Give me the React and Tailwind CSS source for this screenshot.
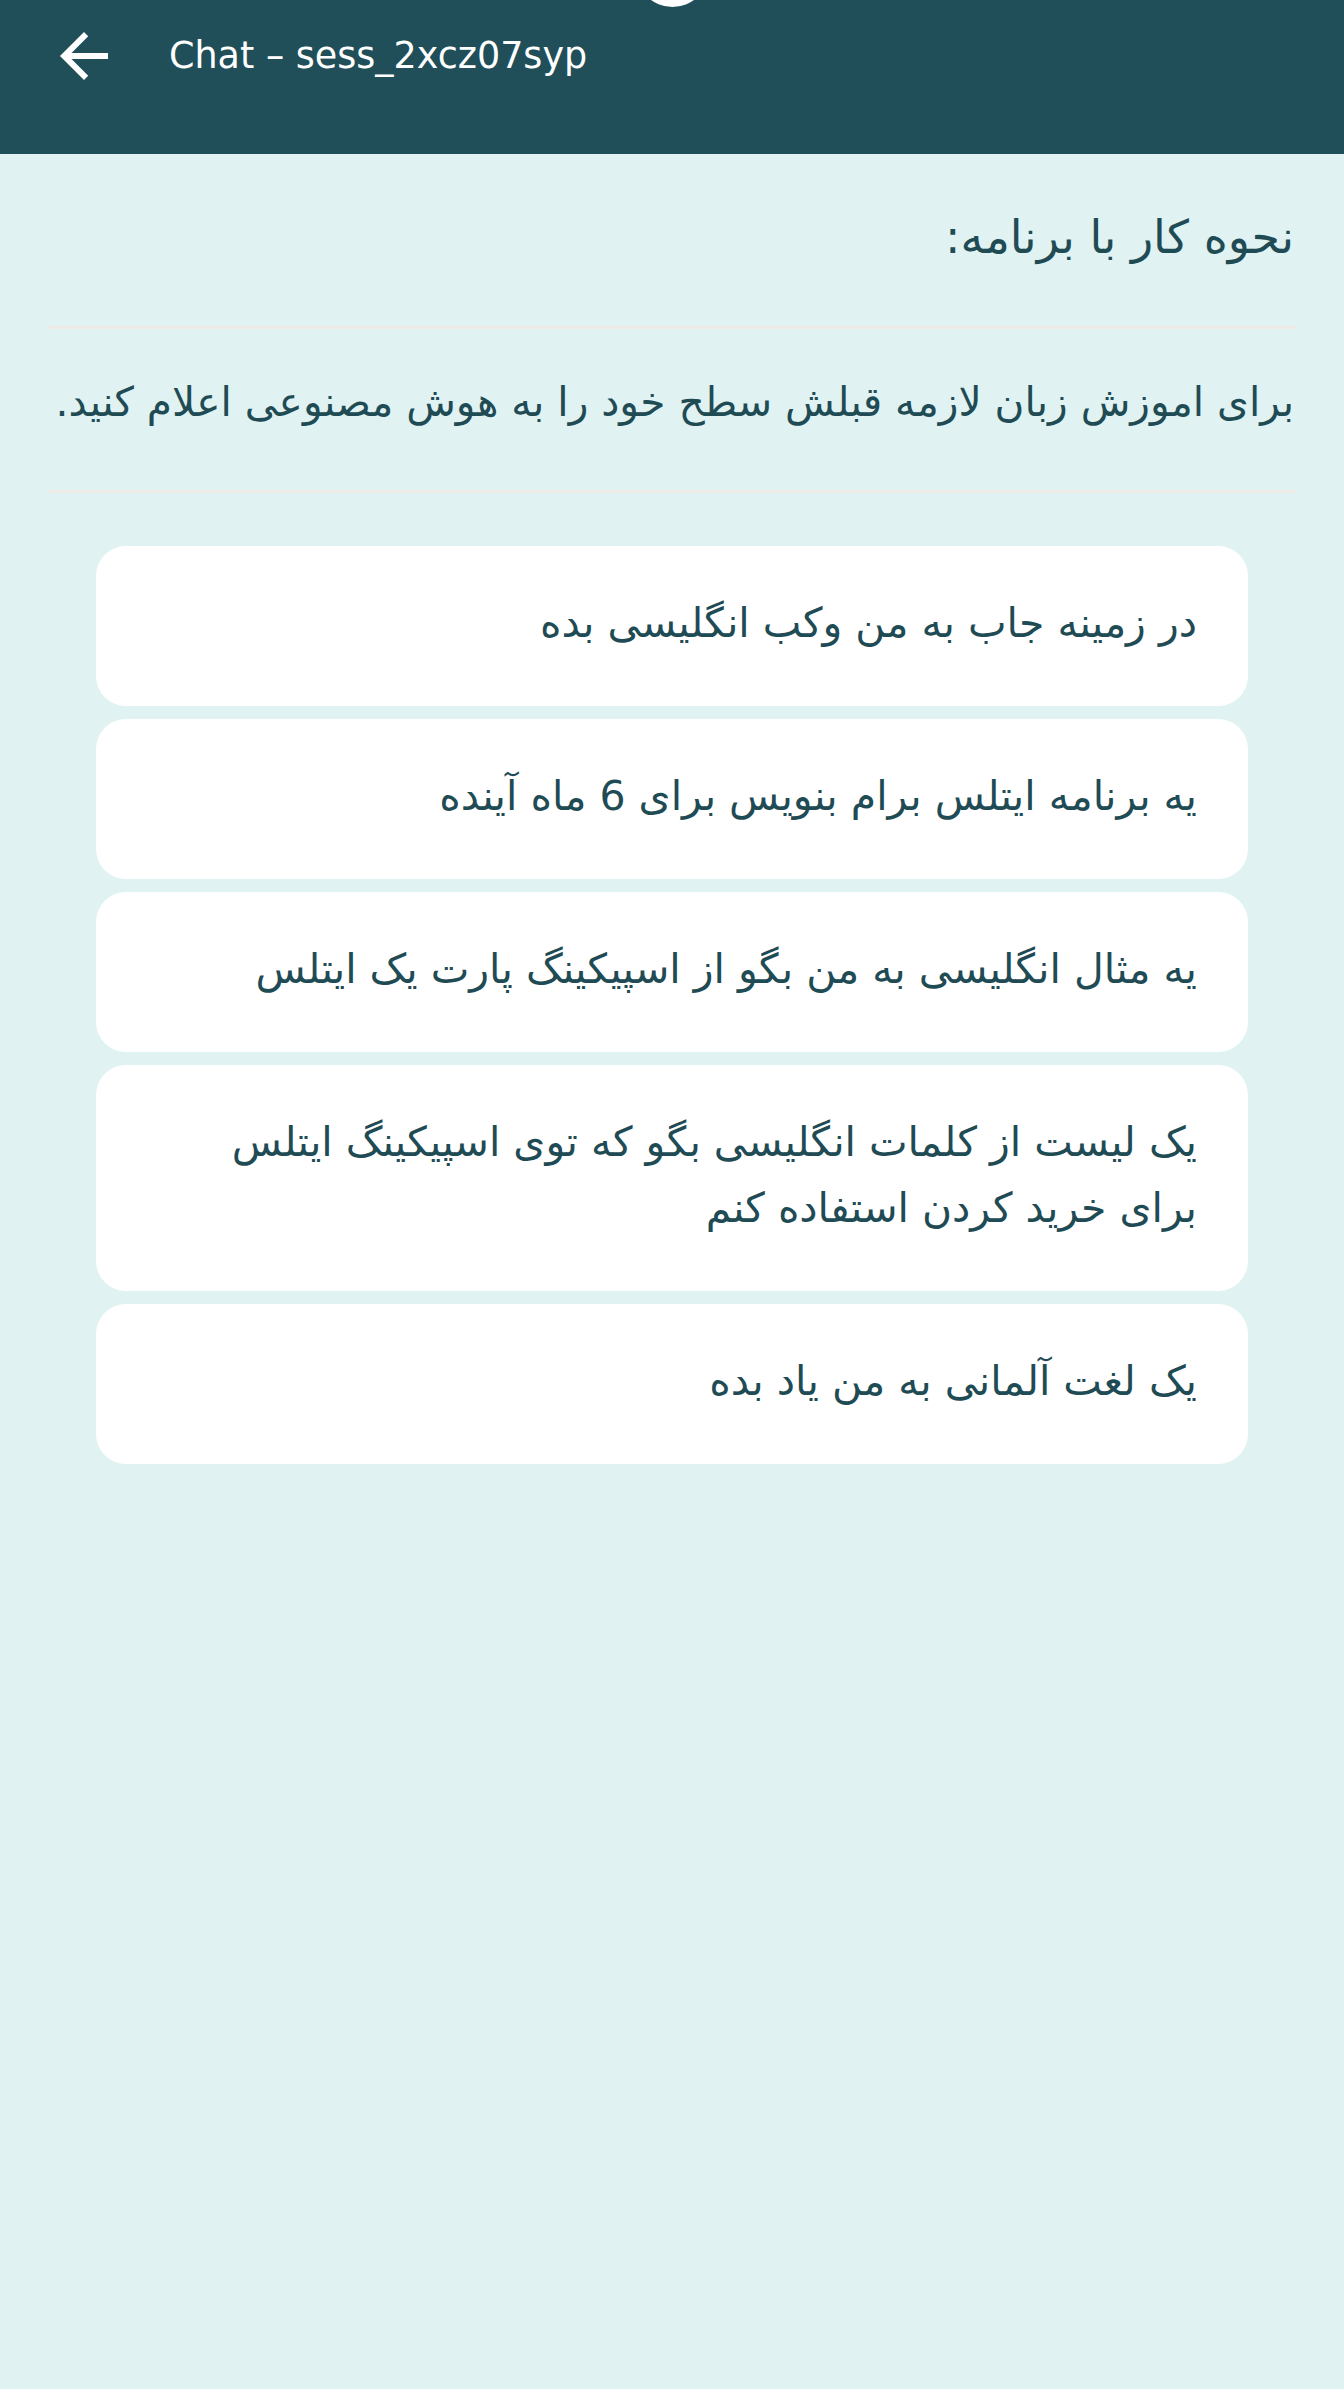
import React from 'react';

const prompts = [
  'در زمینه جاب به من وکب انگلیسی بده',
  'یه برنامه ایتلس برام بنویس برای 6 ماه آینده',
  'یه مثال انگلیسی به من بگو از اسپیکینگ پارت یک ایتلس',
  'یک لیست از کلمات انگلیسی بگو که توی اسپیکینگ ایتلس برای خرید کردن استفاده کنم',
  'یک لغت آلمانی به من یاد بده',
];

const BackIcon = () => (
  <svg viewBox="0 0 24 24" className="w-[72px] h-[72px]" fill="#ffffff">
    <path d="M20 11H7.83l5.59-5.59L12 4l-8 8 8 8 1.41-1.41L7.83 13H20v-2z" />
  </svg>
);

const App = () => {
  return (
    <div className="min-h-[2389px] bg-[#e0f2f1] font-['DejaVu_Sans',sans-serif]">
      <div className="relative h-[154px] bg-[#204f59] overflow-hidden">
        <div className="absolute left-[636px] top-[-66px] w-[73px] h-[73px] rounded-full bg-white"></div>
        <div className="flex items-center h-[112px] pl-[48px]">
          <BackIcon />
          <span className="ml-[49px] text-[36.5px] text-white">Chat – sess_2xcz07syp</span>
        </div>
      </div>

      <div dir="rtl" className="px-[48px] text-[#1f4b55]">
        <div className="h-[172px] flex items-center pb-[6px]">
          <h2 className="text-[46px] px-[2px]">نحوه کار با برنامه:</h2>
        </div>
        <div className="h-[3px] bg-[#efeae6]"></div>
        <div className="h-[161px] flex items-center pb-[14px]">
          <p className="text-[40.7px] px-[2px] whitespace-nowrap">برای اموزش زبان لازمه قبلش سطح خود را به هوش مصنوعی اعلام کنید.</p>
        </div>
        <div className="h-[3px] bg-[#efeae6]"></div>

        <div className="flex flex-col gap-[13px] mt-[53px] px-[48px]">
          {prompts.map((p, i) => (
            <div key={i} className="bg-white rounded-[30px] px-[51px] pt-[44px] pb-[50px] text-[41px] leading-[66px]">
              {p}
            </div>
          ))}
        </div>
      </div>
    </div>
  );
};

export default App;
